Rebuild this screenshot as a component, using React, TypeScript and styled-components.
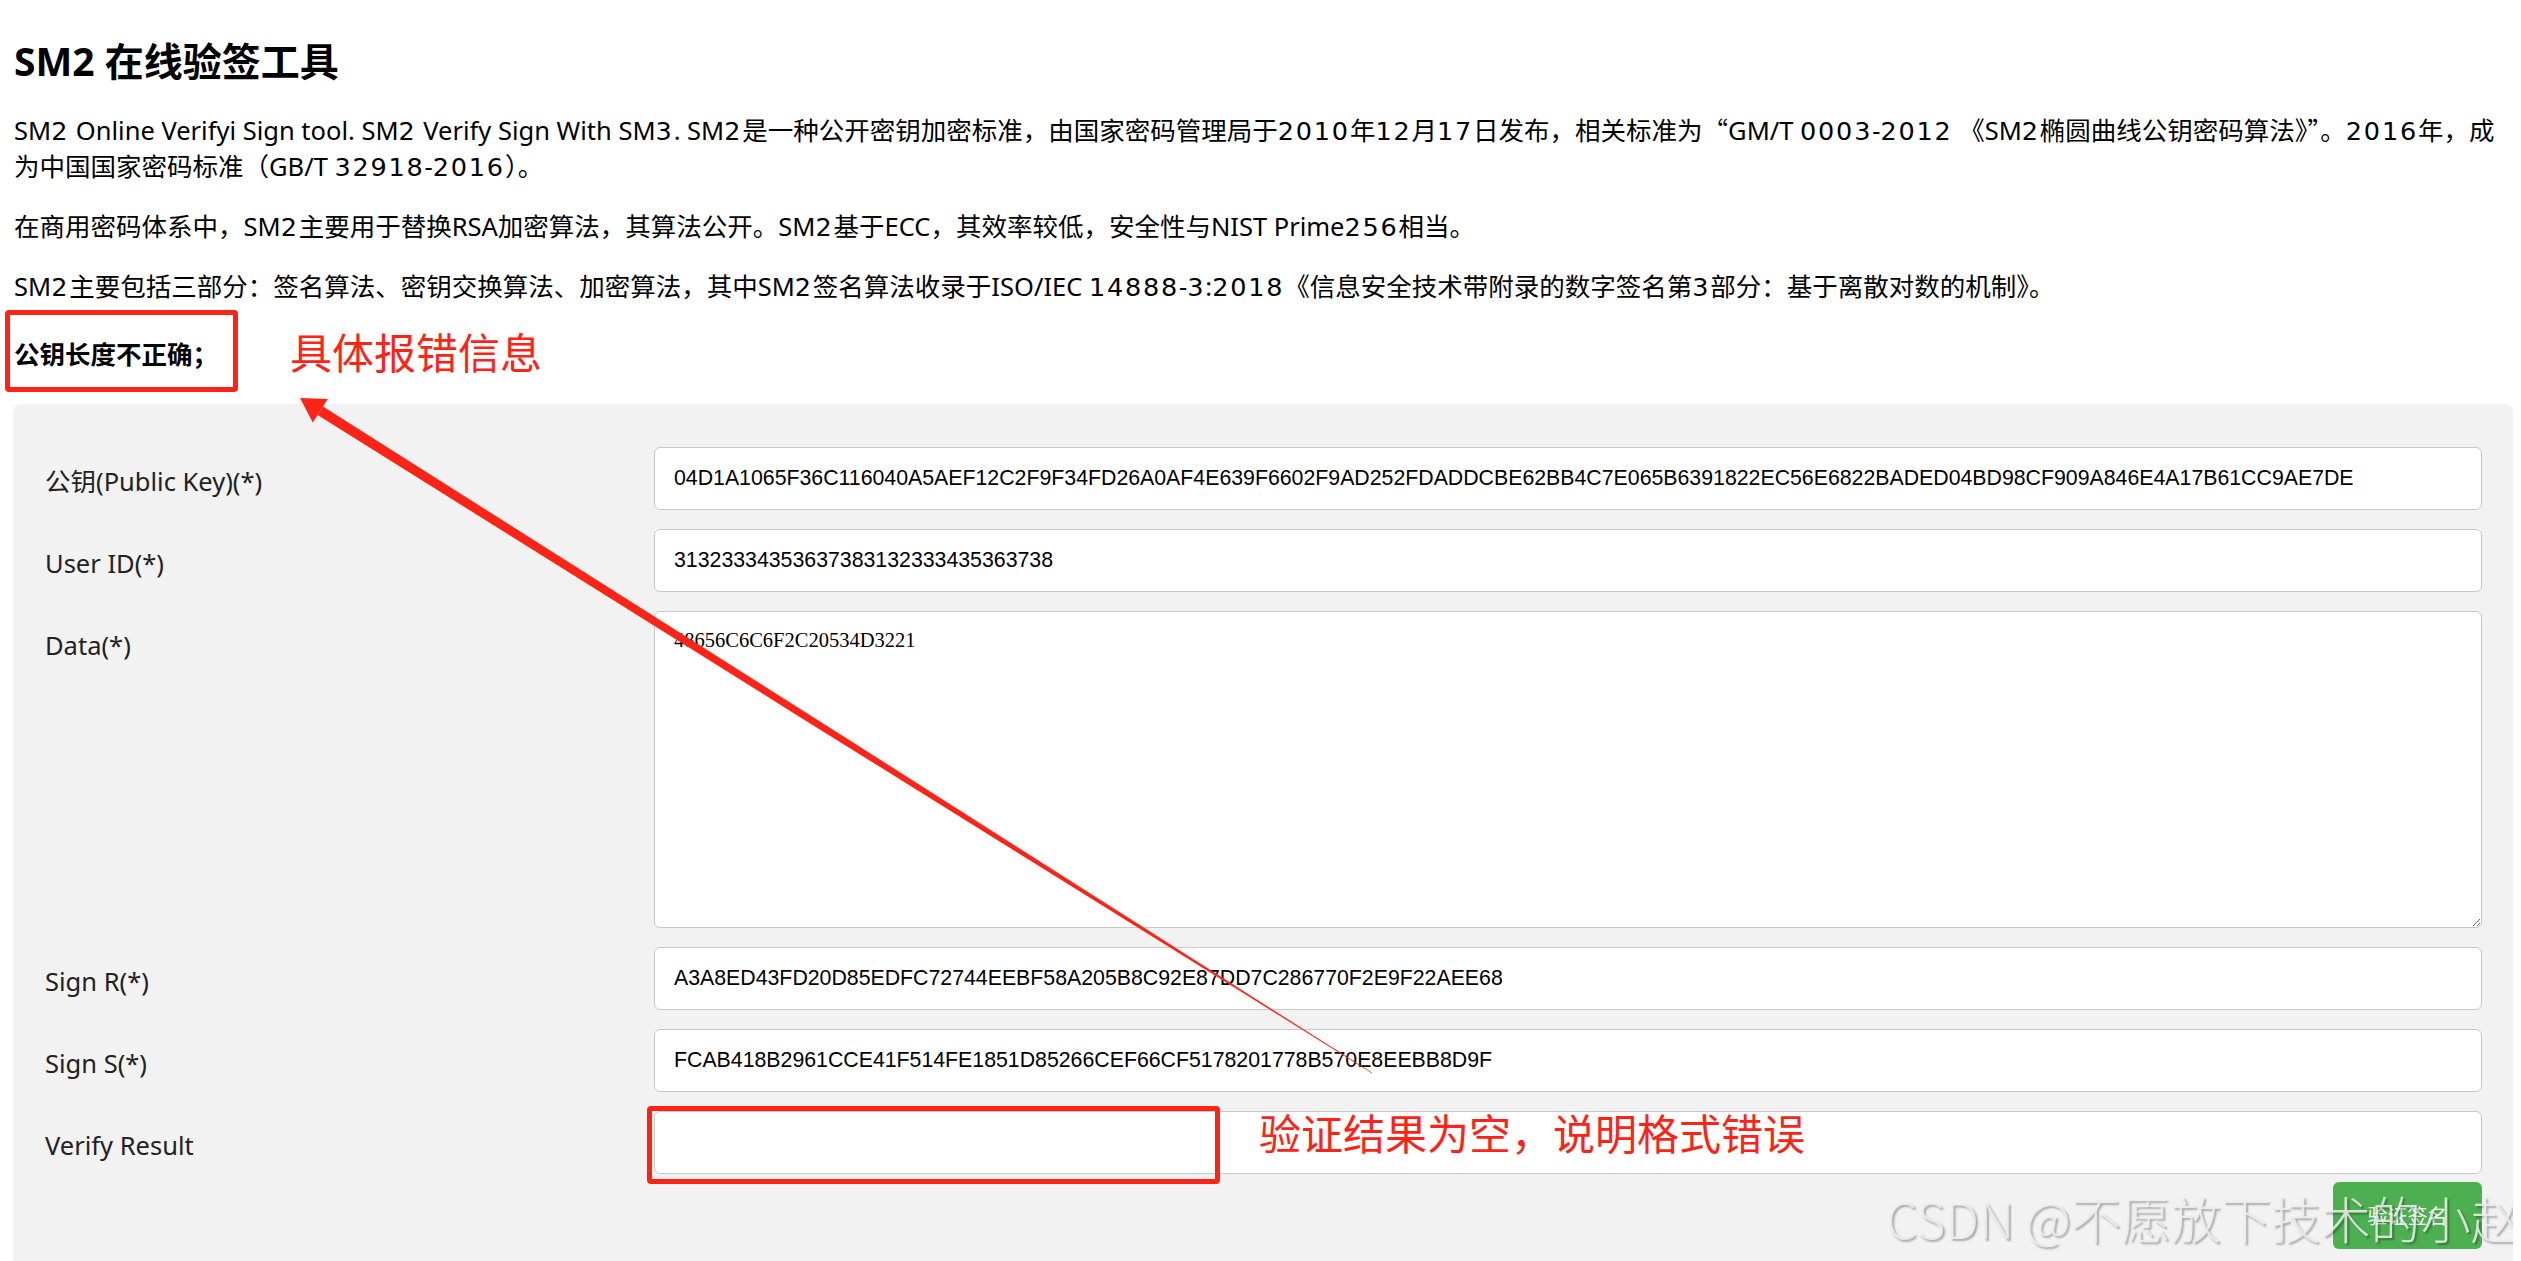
import { Fragment } from "react";
import styled, { createGlobalStyle } from "styled-components";

const PUBLIC_KEY =
    "04D1A1065F36C116040A5AEF12C2F9F34FD26A0AF4E639F6602F9AD252FDADDCBE62BB4C7E065B6391822EC56E6822BADED04BD98CF909A846E4A17B61CC9AE7DE";

const FIELDS = [
    { label: "公钥(Public Key)(*)", value: PUBLIC_KEY },
    { label: "User ID(*)", value: "31323334353637383132333435363738" },
    { label: "Data(*)", value: "48656C6C6F2C20534D3221", multiline: true },
    { label: "Sign R(*)", value: "A3A8ED43FD20D85EDFC72744EEBF58A205B8C92E87DD7C286770F2E9F22AEE68" },
    { label: "Sign S(*)", value: "FCAB418B2961CCE41F514FE1851D85266CEF66CF5178201778B570E8EEBB8D9F" },
    { label: "Verify Result", value: "" },
];

// arrow from the empty result up to the error message
const ARROW_HEAD = "300,398 327.8,399 312.8,422.6";
const ARROW_SHAFT =
    "323,406.6 801.9,709.9 1137.9,923.7 1250.4,995.5 1372.2,1072.7 1371.8,1073.3 1249.6,996.9 1136.1,926.5 798.1,715.9 317.6,415";

// the original font has wider figures than Noto Sans, so digit runs use a wider face
const withDigits = (text: string) =>
    text.split(/(\d+)/).map((part, i) =>
        /^\d+$/.test(part) ? <Digits key={i}>{part}</Digits> : <Fragment key={i}>{part}</Fragment>
    );

const GlobalStyle = createGlobalStyle`
    html, body {
        margin: 0;
        padding: 0;
        background: #ffffff;
    }
    body {
        font-family: "Noto Sans", "Noto Sans CJK SC", sans-serif;
        color: #000000;
    }
`;

const App = () => {
    return (
        <>
            <GlobalStyle />
            <Page>
                <Intro>
                    <Title>SM2 在线验签工具</Title>
                    <Paragraph>
                        {withDigits(
                            "SM2 Online Verifyi Sign tool. SM2 Verify Sign With SM3. SM2是一种公开密钥加密标准，由国家密码管理局于2010年12月17日发布，相关标准为"
                        )}
                        <Cjk>“</Cjk>
                        {withDigits("GM/T 0003-2012 《SM2椭圆曲线公钥密码算法》")}
                        <Cjk>”</Cjk>
                        {withDigits("。2016年，成")}
                        <br />
                        {withDigits("为中国国家密码标准（GB/T 32918-2016）。")}
                    </Paragraph>
                    <Paragraph>
                        {withDigits(
                            "在商用密码体系中，SM2主要用于替换RSA加密算法，其算法公开。SM2基于ECC，其效率较低，安全性与NIST Prime256相当。"
                        )}
                    </Paragraph>
                    <Paragraph>
                        {withDigits(
                            "SM2主要包括三部分：签名算法、密钥交换算法、加密算法，其中SM2签名算法收录于ISO/IEC 14888-3:2018《信息安全技术带附录的数字签名第3部分：基于离散对数的机制》。"
                        )}
                    </Paragraph>
                    <ErrorMessage>公钥长度不正确；</ErrorMessage>
                </Intro>

                <Panel>
                    <Form>
                        {FIELDS.map((field) => (
                            <FieldRow key={field.label}>
                                <Label>{field.label}</Label>
                                {field.multiline ? (
                                    <TextArea readOnly value={field.value} />
                                ) : (
                                    <TextInput readOnly value={field.value} />
                                )}
                            </FieldRow>
                        ))}
                    </Form>
                    <Actions>
                        <VerifyButton type="button">验证签名</VerifyButton>
                    </Actions>
                </Panel>

                <Overlay aria-hidden>
                    <ErrorBox />
                    <ErrorNote>具体报错信息</ErrorNote>
                    <ResultBox />
                    <ResultNote>验证结果为空，说明格式错误</ResultNote>
                    <ArrowSvg width="2521" height="1261" viewBox="0 0 2521 1261">
                        <polygon points={ARROW_SHAFT} fill="#fd2317" />
                        <polygon points={ARROW_HEAD} fill="#fd2317" />
                    </ArrowSvg>
                    <Watermark>CSDN @不愿放下技术的小赵</Watermark>
                </Overlay>
            </Page>
        </>
    );
};

export default App;

const Page = styled.div`
    position: relative;
    width: 2513px;
    height: 1261px;
    overflow: hidden;
    padding-left: 13px;
    box-sizing: border-box;
`;

const Intro = styled.div`
    padding: 36px 0 0 1px;
`;

const Title = styled.h2`
    margin: 0;
    font-size: 39px;
    line-height: 50px;
    font-weight: 700;
`;

const Paragraph = styled.p`
    margin: 24px 0 0;
    font-size: 25.5px;
    line-height: 36px;

    &:first-of-type {
        margin-top: 26px;
    }
`;

const Digits = styled.span`
    font-family: "DejaVu Sans", "Noto Sans", sans-serif;
    letter-spacing: 1.8px;
    line-height: 1;
`;

const Cjk = styled.span`
    font-family: "Noto Sans CJK SC", sans-serif;
    line-height: 1;
`;

const ErrorMessage = styled.div`
    margin-top: 32px;
    font-size: 25.5px;
    line-height: 36px;
    font-weight: 700;
`;

const Panel = styled.div`
    margin-top: 32px;
    background: #f2f2f2;
    border-radius: 8px 8px 0 0;
    padding: 43px 31px 20px 32px;
`;

const Form = styled.div`
    display: flex;
    flex-direction: column;
    gap: 19px;
`;

const FieldRow = styled.div`
    display: grid;
    grid-template-columns: 609px 1fr;
    align-items: start;
`;

const Label = styled.label`
    padding-top: 16px;
    font-size: 25.5px;
    line-height: 36px;
    color: #222222;
`;

const TextInput = styled.input`
    box-sizing: border-box;
    width: 100%;
    height: 63px;
    padding: 0 19px;
    border: 1px solid #c9c9c9;
    border-radius: 6px;
    background: #ffffff;
    font-family: "Liberation Sans", Arial, sans-serif;
    font-size: 21.3px;
    color: #000000;
    outline: none;
`;

const TextArea = styled.textarea`
    box-sizing: border-box;
    width: 100%;
    height: 317px;
    padding: 17px 19px;
    border: 1px solid #c9c9c9;
    border-radius: 6px;
    background: #ffffff;
    font-family: "Liberation Serif", serif;
    font-size: 20.5px;
    line-height: 23px;
    color: #000000;
    outline: none;
    resize: vertical;
`;

const Actions = styled.div`
    display: flex;
    justify-content: flex-end;
    margin-top: 8px;
`;

const VerifyButton = styled.button`
    width: 149px;
    height: 67px;
    border: none;
    border-radius: 6px;
    background: #4caf50;
    color: #ffffff;
    font-family: "Noto Sans CJK SC", sans-serif;
    font-size: 20px;
    cursor: pointer;
`;

const Overlay = styled.div`
    position: absolute;
    inset: 0;
    pointer-events: none;
`;

const ArrowSvg = styled.svg`
    position: absolute;
    top: 0;
    left: 0;
`;

const ErrorBox = styled.div`
    position: absolute;
    left: 5px;
    top: 310px;
    width: 233px;
    height: 82px;
    box-sizing: border-box;
    border: 5px solid #fd2317;
    border-radius: 4px;
`;

const ResultBox = styled.div`
    position: absolute;
    left: 647px;
    top: 1106px;
    width: 573px;
    height: 78px;
    box-sizing: border-box;
    border: 5px solid #fd2317;
    border-radius: 4px;
`;

const Note = styled.div`
    position: absolute;
    font-family: "Noto Sans CJK SC", sans-serif;
    font-size: 42px;
    line-height: 50px;
    font-weight: 400;
    color: #fd2317;
    white-space: nowrap;
`;

const ErrorNote = styled(Note)`
    left: 290px;
    top: 326px;
`;

const ResultNote = styled(Note)`
    left: 1259px;
    top: 1107px;
`;

const Watermark = styled.div`
    position: absolute;
    left: 1886px;
    top: 1187px;
    font-family: "Noto Sans CJK SC", sans-serif;
    font-size: 50px;
    line-height: 60px;
    font-weight: 300;
    color: rgba(238, 238, 238, 0.85);
    text-shadow: 2px 2px 2px rgba(0, 0, 0, 0.3);
    white-space: nowrap;
`;
